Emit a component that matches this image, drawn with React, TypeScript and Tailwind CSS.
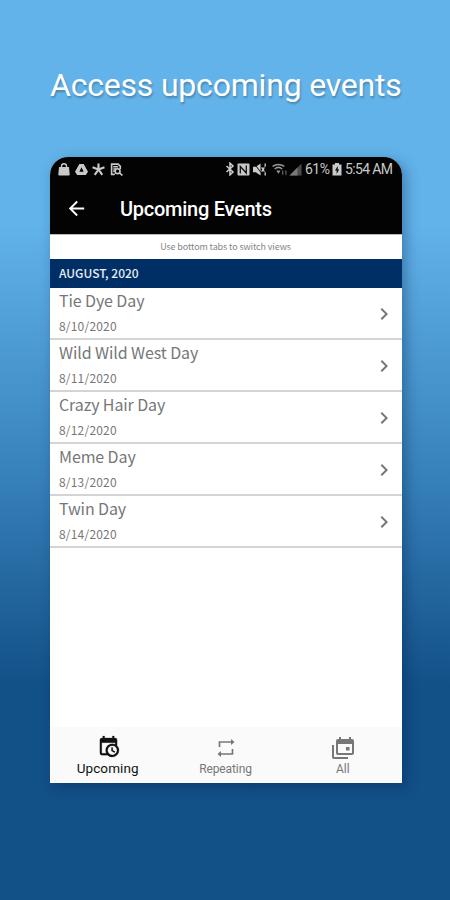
import React from "react";
import { MdArrowBack, MdChevronRight } from "react-icons/md";

const events = [
  { name: "Tie Dye Day", date: "8/10/2020" },
  { name: "Wild Wild West Day", date: "8/11/2020" },
  { name: "Crazy Hair Day", date: "8/12/2020" },
  { name: "Meme Day", date: "8/13/2020" },
  { name: "Twin Day", date: "8/14/2020" },
];

function StatusBar() {
  return (
    <div className="flex h-6 items-center justify-between pl-2 pr-[9px] text-[#c9c9c9]">
      <div className="flex items-center gap-[4.5px]">
        <svg viewBox="0 0 12 13" className="h-[13px] w-3" fill="currentColor">
          <path d="M1 4h10l.7 7.500q0 1-1 1H1.300q-1 0-1-1z" />
          <path d="M3.500 5V3.200a2.500 2.500 0 0 1 5 0V5" fill="none" stroke="currentColor" strokeWidth="1.400" />
        </svg>
        <svg viewBox="0 0 24 24" className="size-[13px]" fill="currentColor">
          <path fillRule="evenodd" d="M8 2h8l8 14-4 6H4l-4-6zM12 8l-4 8h8z" />
        </svg>
        <svg viewBox="0 0 24 24" className="size-[13px]" stroke="currentColor" strokeWidth="4" fill="none">
          <path d="M12 1v11M12 12L1 8M12 12l11-4M12 12L5 22M12 12l7 10" />
        </svg>
        <svg viewBox="0 0 24 24" className="size-[13px]" fill="none" stroke="currentColor" strokeWidth="3">
          <path d="M9 21H3V2h12l4 4v5M6 7h9M6 11h5M6 15h3" />
          <circle cx="14" cy="15" r="4.500" />
          <path d="M17 18l6 5" />
        </svg>
      </div>
      <div className="flex items-center">
        <svg viewBox="0 0 12 14" className="h-[14px] w-3" fill="none" stroke="currentColor" strokeWidth="1.600">
          <path d="M2.500 4l6.500 6-3 2.800V1.200L9 4l-6.500 6" />
        </svg>
        <svg viewBox="0 0 13 13" className="ml-px size-[13px]">
          <rect x=".5" y=".5" width="12" height="12" rx="1" fill="currentColor" />
          <path d="M3.300 10.500v-7l6 6.500V2.500" fill="none" stroke="#111" strokeWidth="1.300" />
        </svg>
        <svg viewBox="0 0 24 24" className="ml-[3px] size-[13px]" fill="currentColor">
          <path d="M0 7h5l9-6v22l-9-6H0z" />
          <path d="M3 2l12 16" stroke="#111" strokeWidth="1.800" />
          <path d="M16 8l5 8M21 8l-5 8M22.500 1v6M22.500 17v6" stroke="currentColor" strokeWidth="2.500" />
        </svg>
        <svg viewBox="0 0 28 24" className="ml-[6px] h-[13px] w-[15px] text-[#999]" fill="none" stroke="currentColor" strokeWidth="2.8">
          <path d="M1 6Q12-1 23 6M5 11q7-6 14 0" />
          <path d="M8 14h8l-4 6z" fill="currentColor" stroke="none" />
          <path d="M20 14v8M26 14v8" strokeWidth="2.500" opacity=".6" />
        </svg>
        <svg viewBox="0 0 13 13" className="ml-[2px] size-[13px]">
          <path d="M12.500.5v12H.5z" fill="#4b4b4b" />
          <path d="M8.500 4.500v8h-8z" fill="#777" />
        </svg>
        <span className="ml-[3px] w-[25px] whitespace-nowrap text-[14px] leading-none tracking-[-0.5px]">61%</span>
        <svg viewBox="0 0 10 13" className="ml-[2px] mr-[3px] h-[13px] w-[10px]">
          <path d="M3 0h4v1.500h2.500v11h-9v-11H3z" fill="currentColor" />
          <path d="M5.800 3L3 7.400h1.600V11l2.600-4.600H5.800z" fill="#111" />
        </svg>
        <span className="w-[48px] whitespace-nowrap text-[14px] leading-none tracking-[-0.65px]">5:54 AM</span>
      </div>
    </div>
  );
}

function CalendarClock() {
  return (
    <svg viewBox="0 0 24 24" className="ml-[2px] size-[23px]" fill="currentColor" stroke="currentColor" strokeWidth=".2">
      <path d="M15,13H16.5V15.82L18.94,17.23L18.19,18.53L15,16.69V13M19,8H5V19H9.67C9.24,18.09 9,17.07 9,16A7,7 0 0,1 16,9C17.07,9 18.09,9.24 19,9.67V8M5,21C3.89,21 3,20.1 3,19V5C3,3.89 3.89,3 5,3H6V1H8V3H16V1H18V3H19A2,2 0 0,1 21,5V11.1C22.24,12.36 23,14.09 23,16A7,7 0 0,1 16,23C14.09,23 12.36,22.24 11.1,21H5M16,11.15A4.85,4.85 0 0,0 11.15,16C11.15,18.68 13.32,20.85 16,20.85A4.85,4.85 0 0,0 20.85,16C20.85,13.32 18.68,11.15 16,11.15Z" />
    </svg>
  );
}

function CalendarStack() {
  return (
    <svg viewBox="0 0 24 24" className="size-6" fill="currentColor">
      <path d="M21,17V8H7V17H21M21,3A2,2 0 0,1 23,5V17A2,2 0 0,1 21,19H7C5.89,19 5,18.1 5,17V5A2,2 0 0,1 7,3H8V1H10V3H18V1H20V3H21M3,21H17V23H3C1.89,23 1,22.1 1,21V9H3V21M18.500,14.5H15V11H18.500V14.5Z" />
    </svg>
  );
}

function Repeat() {
  return (
    <svg viewBox="0 0 18 18" className="ml-px size-[18px]" fill="none" stroke="currentColor" strokeWidth="1.7">
      <path d="M2.500 8V3H14M15.500 10v5H4" />
      <path d="M14 0l3.500 3L14 6zM4 12L.5 15 4 18z" fill="currentColor" stroke="none" />
    </svg>
  );
}

export default function App() {
  return (
    <main className="flex h-[900px] w-[450px] flex-col overflow-hidden bg-linear-to-b from-[#62b3ea] from-[25%] via-[#3781ba] via-[53%] to-[#125088] to-[76%] font-['Roboto',sans-serif]">
      <h1 className="mt-[65px] h-[40px] whitespace-nowrap pl-[50px] text-[32px] leading-[40px] tracking-[-0.2px] text-white [text-shadow:1px_2px_2px_rgba(0,0,0,.25)]">
        Access upcoming events
      </h1>
      <section className="ml-[50px] mt-[52px] flex h-[626px] w-[352px] flex-col overflow-hidden rounded-t-[18px] bg-white shadow-[4px_4px_14px_rgba(0,30,70,.35)]">
        <header className="h-[77px] bg-[#030303]">
          <StatusBar />
          <div className="flex h-[54px] items-center pl-[15px] text-white">
            <MdArrowBack className="size-[23px]" />
            <h2 className="ml-8 mt-px whitespace-nowrap text-[20px] font-medium tracking-[-0.27px]">Upcoming Events</h2>
          </div>
        </header>
        <p className="flex h-[25px] items-center justify-center border-t border-[#bbb] pr-px font-['Noto_Sans_CJK_SC',sans-serif] text-[9px] tracking-[-0.12px] text-[#858585]">
          Use bottom tabs to switch views
        </p>
        <div className="flex h-[29px] items-center bg-[#002f65] pb-[2px] pl-[9px] font-['Noto_Sans_CJK_SC',sans-serif] text-[12px] font-medium text-[#e9edf5]">
          AUGUST, 2020
        </div>
        <ul className="font-['Noto_Sans_CJK_SC',sans-serif] text-[#777]">
          {events.map((event) => (
            <li key={event.date} className="flex h-[52px] items-center justify-between border-b-2 border-[#d4d4d4] pl-[9px] pr-[6px]">
              <div className="pb-px">
                <div className="whitespace-nowrap text-[16px] leading-[25px] tracking-[-0.1px]">{event.name}</div>
                <div className="text-[12px] leading-[25px] tracking-[0.2px]">{event.date}</div>
              </div>
              <MdChevronRight className="mt-px size-6" />
            </li>
          ))}
        </ul>
        <nav className="mt-auto grid h-[56px] grid-cols-3 bg-[#fafafa] text-[#777]">
          <div className="flex flex-col items-center pr-[2px] pt-[8px] text-[#111]">
            <CalendarClock />
            <span className="text-[13.500px] leading-[20px] tracking-[0.1px]">Upcoming</span>
          </div>
          <div className="flex flex-col items-center pr-px pt-[12px]">
            <Repeat />
            <span className="mt-1 text-[12px] leading-[16px] tracking-[-0.1px]">Repeating</span>
          </div>
          <div className="flex flex-col items-center pr-px pt-[9px]">
            <CalendarStack />
            <span className="mt-px text-[12px] leading-[16px]">All</span>
          </div>
        </nav>
      </section>
    </main>
  );
}
